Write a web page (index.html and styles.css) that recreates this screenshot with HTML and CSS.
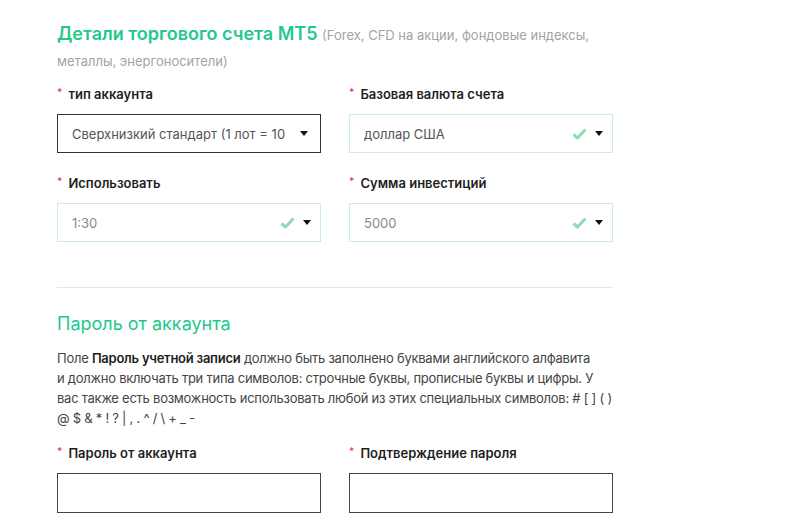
FILE: index.html
```html
<!DOCTYPE html>
<html lang="ru">
<head>
  <meta charset="UTF-8" />
  <title>Детали счета</title>
  <meta name="viewport" content="width=device-width, initial-scale=1.0" />
  <link rel="stylesheet" href="styles.css">
</head>
<body>

  <div class="form-wrap">

    <!-- Детали счета -->
    <h2 class="section-title">Детали торгового счета MT5 <span class="section-note">(Forex, CFD на акции, фондовые индексы, металлы, энергоносители)</span></h2>

    <div class="field-grid">
      <div class="field">
        <div class="field-label"><span class="req">*</span>тип аккаунта</div>
        <div class="select-box active">
          <span class="select-value dark">Сверхнизкий стандарт (1 лот = 10</span>
          <span class="caret"></span>
        </div>
      </div>

      <div class="field">
        <div class="field-label"><span class="req">*</span>Базовая валюта счета</div>
        <div class="select-box valid">
          <span class="select-value dark">доллар США</span>
          <svg class="check" width="15" height="12" viewBox="0 0 15 12"><path d="M1.5 6.5 L5.5 10 L13.5 1.5" fill="none" stroke="#8ddcb2" stroke-width="3" stroke-linejoin="round"/></svg>
          <span class="caret"></span>
        </div>
      </div>

      <div class="field">
        <div class="field-label"><span class="req">*</span>Использовать</div>
        <div class="select-box valid">
          <span class="select-value">1:30</span>
          <svg class="check" width="15" height="12" viewBox="0 0 15 12"><path d="M1.5 6.5 L5.5 10 L13.5 1.5" fill="none" stroke="#8ddcb2" stroke-width="3" stroke-linejoin="round"/></svg>
          <span class="caret"></span>
        </div>
      </div>

      <div class="field">
        <div class="field-label"><span class="req">*</span>Сумма инвестиций</div>
        <div class="select-box valid">
          <span class="select-value">5000</span>
          <svg class="check" width="15" height="12" viewBox="0 0 15 12"><path d="M1.5 6.5 L5.5 10 L13.5 1.5" fill="none" stroke="#8ddcb2" stroke-width="3" stroke-linejoin="round"/></svg>
          <span class="caret"></span>
        </div>
      </div>
    </div>

    <hr class="divider">

    <!-- Пароль -->
    <h2 class="section-title light">Пароль от аккаунта</h2>
    <p class="hint">Поле <b>Пароль учетной записи</b> должно быть заполнено буквами английского алфавита <span class="nowrap">и должно</span> включать три типа символов: строчные буквы, прописные буквы и цифры. У вас также есть возможность использовать любой из этих специальных символов: # [ ] ( ) @ $ &amp; * ! ? | , . ^ / \ + _ -</p>

    <div class="field-grid">
      <div class="field">
        <div class="field-label"><span class="req">*</span>Пароль от аккаунта</div>
        <input class="text-input" type="password">
      </div>
      <div class="field">
        <div class="field-label"><span class="req">*</span>Подтверждение пароля</div>
        <input class="text-input" type="password">
      </div>
    </div>

  </div>

</body>
</html>
```

FILE: styles.css
```css
body {
  margin: 0;
  background-color: #fff;
  font-family: Inter, "Noto Sans", sans-serif;
  color: #333;
}

.form-wrap {
  width: 556px;
  padding: 21px 0 0 57px;
}

.section-title {
  margin: 0;
  font-size: 18px;
  font-weight: 600;
  line-height: 26px;
  color: #1fc98b;
}

.section-title.light {
  font-weight: 400;
}

.section-note {
  font-size: 13px;
  font-weight: 400;
  line-height: 20px;
  color: #a3a3a3;
}

.field-grid {
  display: grid;
  grid-template-columns: 264px 264px;
  column-gap: 28px;
  row-gap: 20px;
  margin-top: 11px;
}

.field-label {
  font-size: 13px;
  font-weight: 600;
  line-height: 20px;
  color: #1e1e1e;
  margin-bottom: 10px;
}

.req {
  color: #e8474c;
  font-size: 10px;
  vertical-align: top;
  margin-right: 6px;
  position: relative;
  top: -2px;
}

.select-box {
  height: 39px;
  box-sizing: border-box;
  border: 1px solid #c9efd9;
  display: flex;
  align-items: center;
  padding: 0 9px 0 14px;
}

.select-box.active {
  border-color: #333;
  padding-right: 12px;
}

.select-value {
  flex: 1;
  font-size: 13px;
  color: #8a8a8a;
  white-space: nowrap;
  overflow: hidden;
}

.select-value.dark {
  color: #555;
}

.check {
  margin-right: 2px;
}

.caret {
  width: 0;
  height: 0;
  border-left: 4.5px solid transparent;
  border-right: 4.5px solid transparent;
  border-top: 5px solid #111;
  margin-left: 6px;
}

.divider {
  border: 0;
  border-top: 1px solid #e6e6e6;
  margin: 45px 0 23px;
}

.hint {
  margin: 11px 0 15px;
  font-size: 13px;
  line-height: 20px;
  letter-spacing: -0.25px;
  color: #444;
}

.hint b {
  color: #1e1e1e;
  font-weight: 600;
}

.nowrap {
  white-space: nowrap;
}

.text-input {
  display: block;
  width: 100%;
  height: 40px;
  box-sizing: border-box;
  border: 1px solid #444;
  margin: 0;
  padding: 0 14px;
}
```
